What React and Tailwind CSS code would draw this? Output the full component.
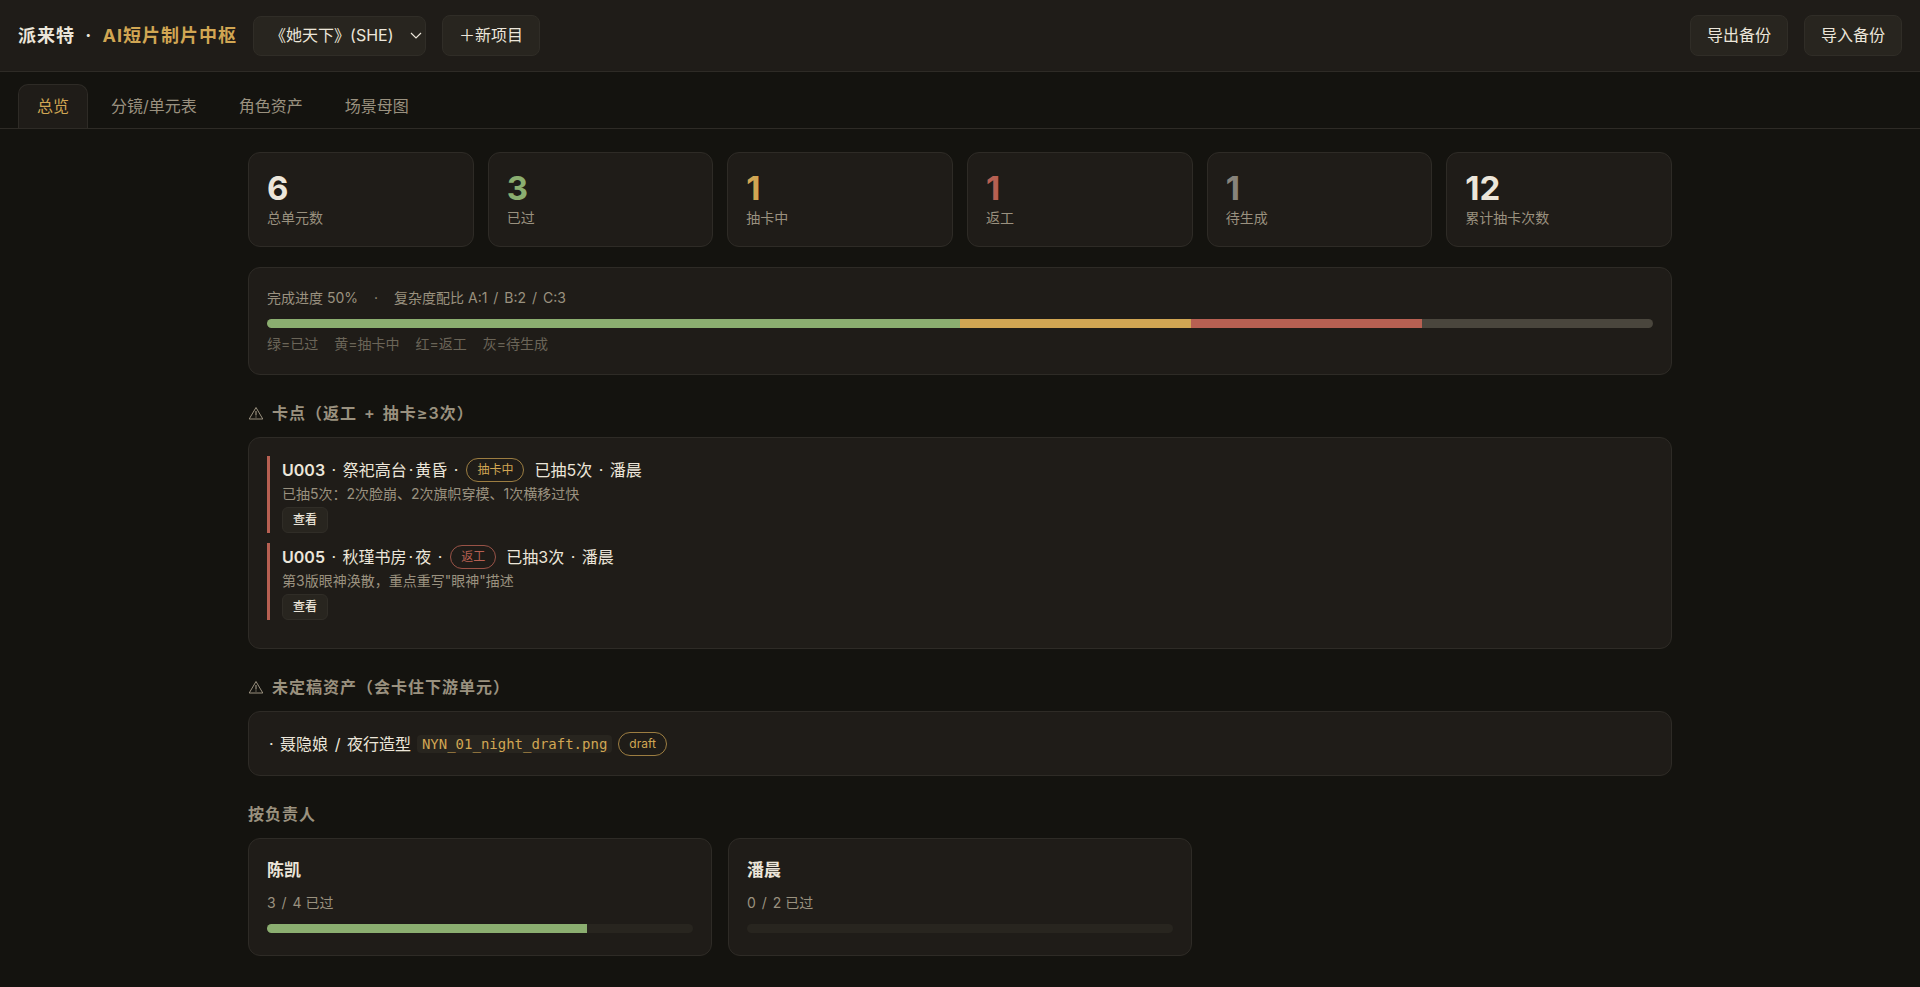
const stats = [
  { value: 6, label: "总单元数", color: "text-[#ece6da]" },
  { value: 3, label: "已过", color: "text-[#8bae70]" },
  { value: 1, label: "抽卡中", color: "text-[#d1a653]" },
  { value: 1, label: "返工", color: "text-[#b76052]" },
  { value: 1, label: "待生成", color: "text-[#87837b]" },
  { value: 12, label: "累计抽卡次数", color: "text-[#ece6da]" },
];

const progress = [
  { color: "bg-[#8bae70]", count: 3 },
  { color: "bg-[#d1a653]", count: 1 },
  { color: "bg-[#b76052]", count: 1 },
  { color: "bg-[#4a463d]", count: 1 },
];

const blockers = [
  {
    id: "U003",
    place: "祭祀高台",
    time: "黄昏",
    status: "抽卡中",
    badge: "border-[#d1a653]/70 text-[#d1a653]",
    draws: 5,
    owner: "潘晨",
    note: "已抽5次：2次脸崩、2次旗帜穿模、1次横移过快",
  },
  {
    id: "U005",
    place: "秋瑾书房",
    time: "夜",
    status: "返工",
    badge: "border-[#b76052]/80 text-[#b76052]",
    draws: 3,
    owner: "潘晨",
    note: '第3版眼神涣散，重点重写"眼神"描述',
  },
];

const owners = [
  { name: "陈凯", done: 3, total: 4 },
  { name: "潘晨", done: 0, total: 2 },
];

const tabs = ["总览", "分镜/单元表", "角色资产", "场景母图"];

function Button({ children }) {
  return (
    <button
      type="button"
      className="h-[41px] rounded-lg border border-[#302d27] bg-[#28251f] px-4 pb-px text-base"
    >
      {children}
    </button>
  );
}

function Card({ className = "", children }) {
  return (
    <div className={`rounded-xl border border-[#2e2b26] bg-[#1f1c18] p-[18px] ${className}`}>
      {children}
    </div>
  );
}

function Badge({ className, children }) {
  return (
    <span
      className={`inline-block h-6 rounded-full border px-[10px] text-xs leading-[22px] ${className}`}
    >
      {children}
    </span>
  );
}

// Separator with a little air on both sides
function Sep({ children = "·" }) {
  return <span className="mx-[2px]">{children}</span>;
}

function WarningIcon() {
  return (
    <svg
      viewBox="0 0 16 16"
      className="h-4 w-4"
      fill="none"
      stroke="currentColor"
      strokeLinejoin="round"
      aria-hidden="true"
    >
      <path d="M8 2.5 14.8 14H1.2Z" />
      <path d="M8 6v4.5M8 11.4v1.2" strokeWidth="1.2" />
    </svg>
  );
}

function SectionTitle({ warn, children }) {
  return (
    <h2 className="mt-[26px] mb-3 flex h-6 items-center gap-2 text-base font-semibold tracking-[1px] text-[#9a917f]">
      {warn && <WarningIcon />}
      <span>{children}</span>
    </h2>
  );
}

export default function App() {
  return (
    <div className="min-h-screen bg-[#14130f] font-[Inter,'Noto_Sans_CJK_SC',sans-serif] text-base text-[#ece6da]">
      {/* Header */}
      <header className="flex items-center gap-4 border-b border-[#2e2b26] bg-[#1f1c18] px-[18px] py-[15px]">
        <h1 className="text-lg font-bold tracking-[1px]">
          派来特 <span className="mx-[5px]">·</span>{" "}
          <span className="text-[#d1a653]">AI短片制片中枢</span>
        </h1>
        <div className="relative">
          <select
            aria-label="项目"
            className="block h-10 w-[173px] appearance-none rounded-lg border border-[#302d27] bg-[#28251f] pb-px pl-4 text-base"
          >
            <option>《她天下》(SHE)</option>
          </select>
          <svg
            viewBox="0 0 12 8"
            className="pointer-events-none absolute top-4 right-1 h-2 w-3"
            fill="none"
            stroke="currentColor"
            strokeWidth="1.2"
            aria-hidden="true"
          >
            <path d="m1 1 5 5 5-5" />
          </svg>
        </div>
        <Button>＋新项目</Button>
        <div className="ml-auto flex gap-4">
          <Button>导出备份</Button>
          <Button>导入备份</Button>
        </div>
      </header>

      {/* Tabs */}
      <nav className="flex gap-1 border-b border-[#2e2b26] px-[18px] pt-3">
        {tabs.map((tab, i) => (
          <button
            key={tab}
            type="button"
            className={`h-11 rounded-t-[10px] border border-b-0 px-[18px] pb-px ${
              i === 0
                ? "border-[#2e2b26] bg-[#1f1c18] text-[#d1a653]"
                : "border-transparent text-[#9a917f]"
            }`}
          >
            {tab}
          </button>
        ))}
      </nav>

      <main className="mx-auto max-w-[1460px] px-[18px] pt-[23px] pb-7">
        {/* Stats */}
        <div className="grid grid-cols-6 gap-[14px]">
          {stats.map((s) => (
            <Card key={s.label}>
              <div className={`text-[33px] leading-[34px] font-bold ${s.color}`}>{s.value}</div>
              <div className="mt-[3px] mb-px text-sm leading-[19px] text-[#9a917f]">{s.label}</div>
            </Card>
          ))}
        </div>

        {/* Progress */}
        <Card className="mt-5">
          <div className="flex gap-4 text-sm leading-6 text-[#9a917f]">
            <span>完成进度 50%</span>
            <span>·</span>
            <span>
              复杂度配比 A:1 <Sep>/</Sep> B:2 <Sep>/</Sep> C:3
            </span>
          </div>
          <div className="mt-[9px] flex h-[9px] overflow-hidden rounded-full">
            {progress.map((p) => (
              <div key={p.color} className={p.color} style={{ flexGrow: p.count }} />
            ))}
          </div>
          <div className="mt-1 flex gap-4 text-sm leading-6 text-[#6b6558]">
            <span>绿=已过</span>
            <span>黄=抽卡中</span>
            <span>红=返工</span>
            <span>灰=待生成</span>
          </div>
        </Card>

        {/* Blockers */}
        <SectionTitle warn>
          卡点（返工 <Sep>+</Sep> 抽卡≥3次）
        </SectionTitle>
        <Card>
          {blockers.map((b) => (
            <div key={b.id} className="mb-[10px] border-l-3 border-[#b76052] pl-3">
              <div className="flex h-[27px] items-center gap-[6px]">
                <span>
                  <b className="font-semibold">{b.id}</b> <Sep /> {b.place}
                  <Sep />
                  {b.time} <Sep />
                </span>
                <Badge className={b.badge}>{b.status}</Badge>
                <span className="ml-1">
                  已抽{b.draws}次 <Sep /> {b.owner}
                </span>
              </div>
              <div className="text-sm leading-[22px] text-[#9a917f]">{b.note}</div>
              <button
                type="button"
                className="mt-[2px] block h-[26px] rounded-md border border-[#302d27] bg-[#28251f] px-[10px] text-xs font-medium"
              >
                查看
              </button>
            </div>
          ))}
        </Card>

        {/* Draft assets */}
        <SectionTitle warn>未定稿资产（会卡住下游单元）</SectionTitle>
        <Card>
          <div className="flex h-[27px] items-center gap-[6px]">
            <span>
              <Sep /> 聂隐娘 <Sep>/</Sep> 夜行造型
            </span>
            <code className="rounded bg-[#28251f] px-[5px] font-['DejaVu_Sans_Mono',monospace] text-sm leading-[18px] text-[#d1a653]">
              NYN_01_night_draft.png
            </code>
            <Badge className="border-[#d1a653]/70 text-[#d1a653]">draft</Badge>
          </div>
        </Card>

        {/* Owners */}
        <SectionTitle>按负责人</SectionTitle>
        <div className="grid grid-cols-3 gap-4">
          {owners.map((o) => (
            <Card key={o.name}>
              <h3 className="text-[17px] leading-[26px] font-bold">{o.name}</h3>
              <p className="mt-[6px] text-sm leading-7 text-[#9a917f]">
                {o.done} <Sep>/</Sep> {o.total} 已过
              </p>
              <div className="mt-[7px] mb-1 h-[9px] overflow-hidden rounded-full bg-[#28251f]">
                <div
                  className="h-full bg-[#8bae70]"
                  style={{ width: `${(o.done / o.total) * 100}%` }}
                />
              </div>
            </Card>
          ))}
        </div>
      </main>
    </div>
  );
}
